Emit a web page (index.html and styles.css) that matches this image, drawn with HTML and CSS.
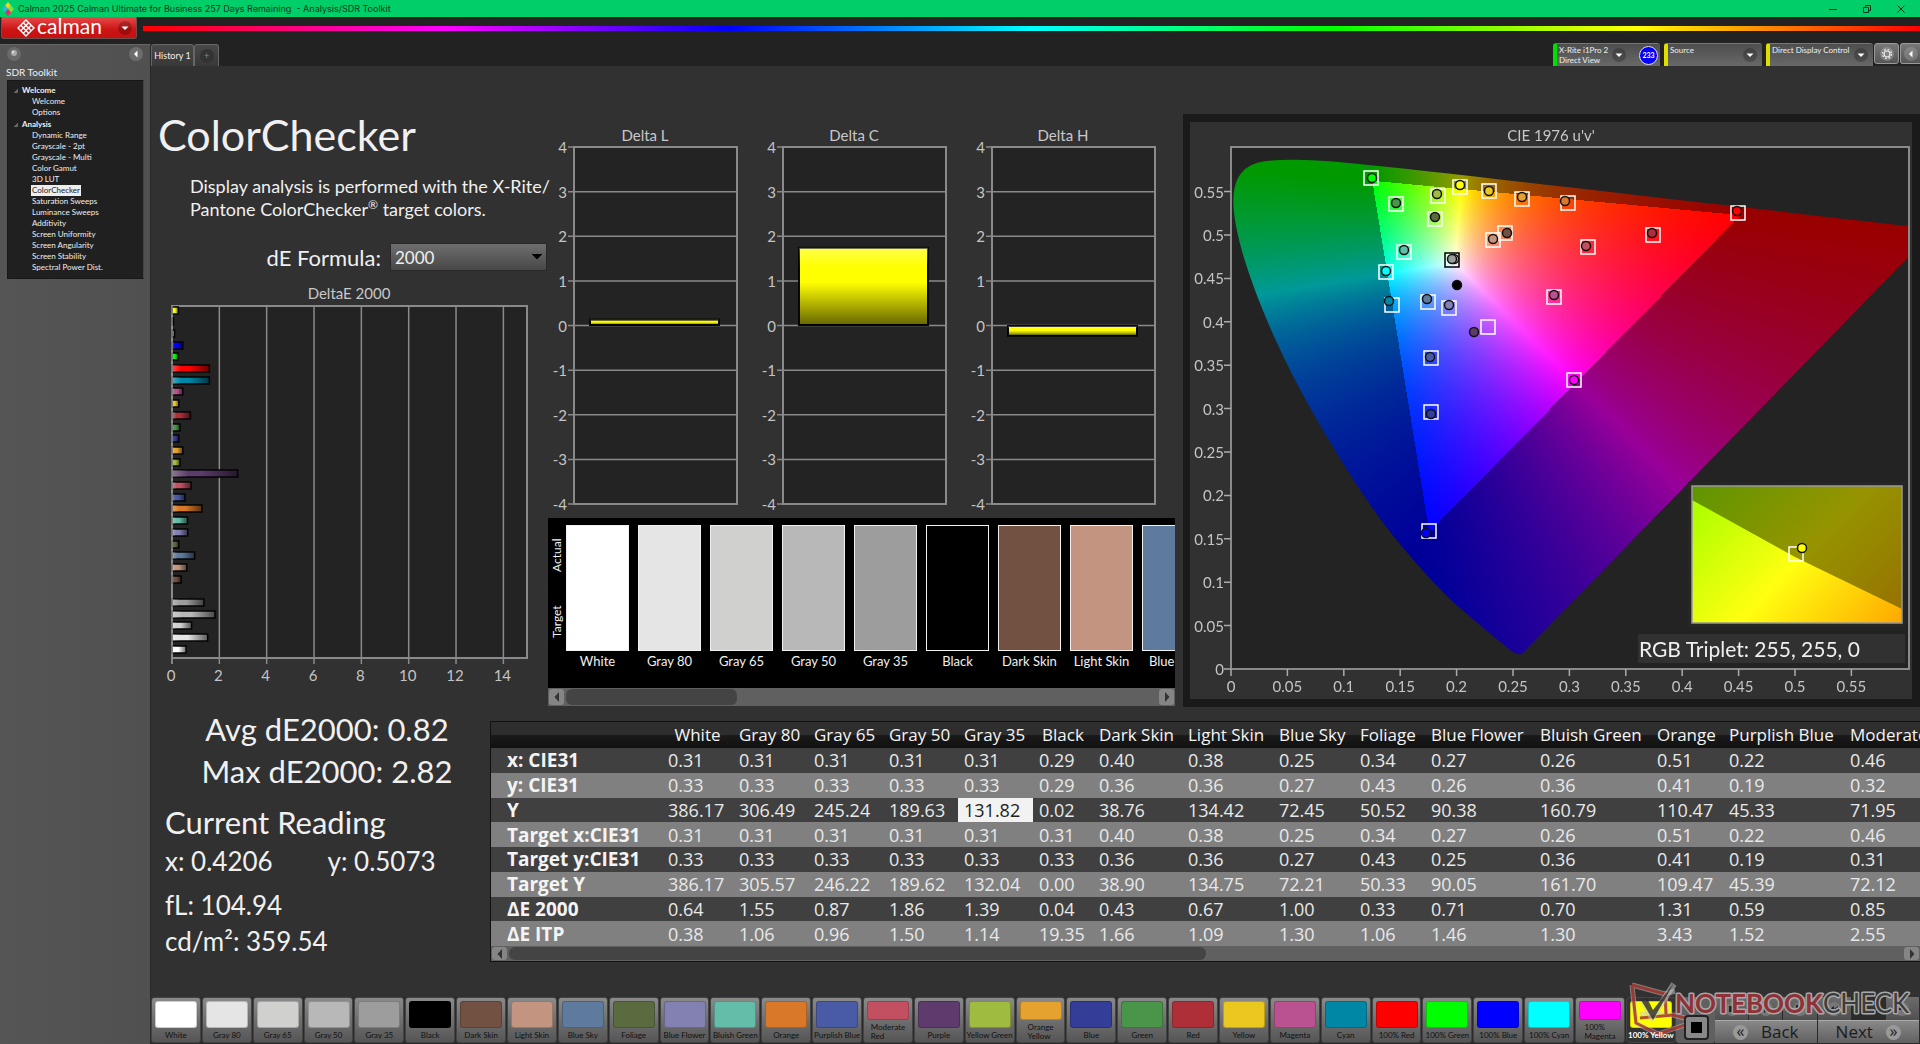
FILE: index.html
```html
<!DOCTYPE html>
<html lang="en">
<head>
<meta charset="utf-8">
<title>Calman 2025 - Analysis/SDR Toolkit</title>
<link rel="stylesheet" href="styles.css">
</head>
<body>
<svg class="defs" width="0" height="0" aria-hidden="true">
  <defs>
    <symbol id="down" viewBox="0 0 14 14"><circle cx="7" cy="7" r="7" fill="#000" opacity=".22"/><path d="M3.500 5.500h7L7 9z" fill="#fff"/></symbol>
    <symbol id="left" viewBox="0 0 14 14"><circle cx="7" cy="7" r="7" fill="#fff" opacity=".16"/><path d="M8.500 3.500v7L5 7z" fill="#fff"/></symbol>
    <symbol id="tri-left" viewBox="0 0 8 12"><path d="M6 1v10L1.500 6z" fill="#333"/></symbol>
    <symbol id="tri-right" viewBox="0 0 8 12"><path d="M2 1v10L6.500 6z" fill="#333"/></symbol>
  </defs>
</svg>
<div class="app">
  <header class="titlebar">
    <svg class="app-icon" viewBox="0 0 12 14"><path d="M6 0l3 3.500-3 3.500-3-3.500z" fill="#f4d21c"/><path d="M3 3.500l3 3.500-3 3.500L0 7z" fill="#29b6e8"/><path d="M9 3.500l3 3.500-3 3.500L6 7z" fill="#7ee03a"/><path d="M6 7l3 3.500L6 14l-3-3.500z" fill="#e82a62"/></svg>
    <span class="title-text">Calman 2025 Calman Ultimate for Business 257 Days Remaining&nbsp; - Analysis/SDR Toolkit</span>
    <div class="window-buttons">
      <button class="win" aria-label="Minimize"><svg viewBox="0 0 10 10"><path d="M1 5.500h8" /></svg></button>
      <button class="win" aria-label="Restore"><svg viewBox="0 0 10 10"><path d="M1.500 3.500h5v5h-5zM3.500 3V1.500h5v5H7"/></svg></button>
      <button class="win" aria-label="Close"><svg viewBox="0 0 10 10"><path d="M1.500 1.500l7 7M8.500 1.500l-7 7"/></svg></button>
    </div>
  </header>
  <div class="brandbar">
    <button class="brand">
      <svg class="brand-mark" viewBox="0 0 18 18"><g fill="none" stroke="#fff" stroke-width="1.400"><path d="M9 1l8 8-8 8-8-8z"/><path d="M6.300 3.700l8 8M3.700 6.300l8 8M11.700 3.700l-8 8M14.300 6.300l-8 8"/></g></svg>
      <span class="brand-name">calman</span>
      <svg class="round"><use href="#down"/></svg>
    </button>
    <div class="rainbow"></div>
  </div>
  <div class="body">
    <aside class="sidebar">
      <div class="side-tools">
        <button class="plain" aria-label="Record"><svg class="round"><circle cx="7" cy="7" r="7" fill="#6a6a6a"/><circle cx="7" cy="6" r="3" fill="#aaa"/><circle cx="6" cy="5" r="1" fill="#eee"/></svg></button>
        <button class="plain" aria-label="Collapse"><svg class="round"><use href="#left"/></svg></button>
      </div>
      <h2 class="side-title">SDR Toolkit</h2>
      <nav class="tree">
        <h3 class="tree-head">Welcome</h3>
        <ul class="tree-list">
          <li><a href="#welcome">Welcome</a></li>
          <li><a href="#options">Options</a></li>
        </ul>
        <h3 class="tree-head">Analysis</h3>
        <ul class="tree-list">
          <li><a href="#dynamic">Dynamic Range</a></li>
          <li><a href="#gray2">Grayscale - 2pt</a></li>
          <li><a href="#graym">Grayscale - Multi</a></li>
          <li><a href="#gamut">Color Gamut</a></li>
          <li><a href="#lut">3D LUT</a></li>
          <li><a class="current" href="#checker">ColorChecker</a></li>
          <li><a href="#saturation">Saturation Sweeps</a></li>
          <li><a href="#luminance">Luminance Sweeps</a></li>
          <li><a href="#additivity">Additivity</a></li>
          <li><a href="#uniformity">Screen Uniformity</a></li>
          <li><a href="#angularity">Screen Angularity</a></li>
          <li><a href="#stability">Screen Stability</a></li>
          <li><a href="#spectral">Spectral Power Dist.</a></li>
        </ul>
      </nav>
    </aside>
    <div class="workspace">
      <div class="tabs">
        <button class="tab">History 1</button><button class="tab add" aria-label="Add history"><span class="plus">+</span></button>
        <div class="devices">
          <button class="device meter"><span class="device-name">X-Rite i1Pro 2<br>Direct View</span><svg class="round"><use href="#down"/></svg><span class="count">233</span></button>
          <button class="device source"><span class="device-name">Source</span><svg class="round"><use href="#down"/></svg></button>
          <button class="device display"><span class="device-name">Direct Display Control</span><svg class="round"><use href="#down"/></svg></button>
          <button class="tool" aria-label="Settings"><svg class="round" viewBox="0 0 14 14"><circle cx="7" cy="7" r="7" fill="#fff" opacity=".2"/><circle cx="7" cy="7" r="3" fill="none" stroke="#eee" stroke-width="1.200"/><circle cx="7" cy="7" r="4.500" fill="none" stroke="#eee" stroke-width="1.200" stroke-dasharray="1.770"/></svg></button>
          <button class="tool last" aria-label="Collapse"><svg class="round"><use href="#left"/></svg></button>
        </div>
      </div>
      <main class="page">
        <div class="upper">
          <section class="intro">
            <h1 class="heading">ColorChecker</h1>
            <p class="lead">Display analysis is performed with the X-Rite/<br>Pantone ColorChecker<sup>®</sup> target colors.</p>
            <div class="formula">
              <label for="formula">dE Formula:</label>
              <select id="formula"><option>2000</option></select>
            </div>
            <svg class="delta-e" id="delta-e" viewBox="0 0 397 402"></svg>
          </section>
          <section class="middle">
            <div class="deltas" id="deltas"></div>
            <div class="patches">
              <div class="sides"><span>Actual</span><span>Target</span></div>
              <figure class="patch"><div class="fill white"></div><figcaption>White</figcaption></figure>
              <figure class="patch"><div class="fill gray80"></div><figcaption>Gray 80</figcaption></figure>
              <figure class="patch"><div class="fill gray65"></div><figcaption>Gray 65</figcaption></figure>
              <figure class="patch"><div class="fill gray50"></div><figcaption>Gray 50</figcaption></figure>
              <figure class="patch"><div class="fill gray35"></div><figcaption>Gray 35</figcaption></figure>
              <figure class="patch"><div class="fill black"></div><figcaption>Black</figcaption></figure>
              <figure class="patch"><div class="fill darkskin"></div><figcaption>Dark Skin</figcaption></figure>
              <figure class="patch"><div class="fill lightskin"></div><figcaption>Light Skin</figcaption></figure>
              <figure class="patch"><div class="fill bluesky"></div><figcaption>Blue Sky</figcaption></figure>
            </div>
            <div class="scroll">
              <button class="scroll-btn" aria-label="Scroll left"><svg><use href="#tri-left"/></svg></button>
              <div class="scroll-track"><div class="thumb short"></div></div>
              <button class="scroll-btn" aria-label="Scroll right"><svg><use href="#tri-right"/></svg></button>
            </div>
          </section>
          <section class="cie">
            <svg class="cie-chart" id="cie" viewBox="1190 121 722 577">
              <rect x="1231" y="146" width="678" height="522" fill="#232323"/>
              <foreignObject x="1231" y="146" width="678" height="522"><canvas class="gamut" id="gamut" width="678" height="522"></canvas></foreignObject>
            </svg>
          </section>
        </div>
        <div class="lower">
          <section class="readings">
            <div class="summary"><div>Avg dE2000: 0.82</div><div>Max dE2000: 2.82</div></div>
            <h2 class="reading-title">Current Reading</h2>
            <div class="xy"><span>x: 0.4206</span><span>y: 0.5073</span></div>
            <div class="fl">fL: 104.94</div>
            <div class="nits">cd/m²: 359.54</div>
          </section>
          <section class="grid">
            <div class="grid-view">
            <table class="data">
              <colgroup><col class="w171"><col class="w71"><col class="w75"><col class="w75"><col class="w75"><col class="w75"><col class="w60"><col class="w89"><col class="w91"><col class="w81"><col class="w71"><col class="w109"><col class="w117"><col class="w72"><col class="w121"><col class="w140"></colgroup>
              <thead><tr><th></th><th class="mid">White</th><th>Gray 80</th><th>Gray 65</th><th>Gray 50</th><th>Gray 35</th><th class="mid">Black</th><th>Dark Skin</th><th>Light Skin</th><th>Blue Sky</th><th>Foliage</th><th>Blue Flower</th><th>Bluish Green</th><th>Orange</th><th>Purplish Blue</th><th>Moderate Red</th></tr></thead>
              <tbody>
                <tr><th>x: CIE31</th><td>0.31</td><td>0.31</td><td>0.31</td><td>0.31</td><td>0.31</td><td>0.29</td><td>0.40</td><td>0.38</td><td>0.25</td><td>0.34</td><td>0.27</td><td>0.26</td><td>0.51</td><td>0.22</td><td>0.46</td></tr>
                <tr><th>y: CIE31</th><td>0.33</td><td>0.33</td><td>0.33</td><td>0.33</td><td>0.33</td><td>0.29</td><td>0.36</td><td>0.36</td><td>0.27</td><td>0.43</td><td>0.26</td><td>0.36</td><td>0.41</td><td>0.19</td><td>0.32</td></tr>
                <tr><th>Y</th><td>386.17</td><td>306.49</td><td>245.24</td><td>189.63</td><td class="selected">131.82</td><td>0.02</td><td>38.76</td><td>134.42</td><td>72.45</td><td>50.52</td><td>90.38</td><td>160.79</td><td>110.47</td><td>45.33</td><td>71.95</td></tr>
                <tr><th>Target x:CIE31</th><td>0.31</td><td>0.31</td><td>0.31</td><td>0.31</td><td>0.31</td><td>0.31</td><td>0.40</td><td>0.38</td><td>0.25</td><td>0.34</td><td>0.27</td><td>0.26</td><td>0.51</td><td>0.22</td><td>0.46</td></tr>
                <tr><th>Target y:CIE31</th><td>0.33</td><td>0.33</td><td>0.33</td><td>0.33</td><td>0.33</td><td>0.33</td><td>0.36</td><td>0.36</td><td>0.27</td><td>0.43</td><td>0.25</td><td>0.36</td><td>0.41</td><td>0.19</td><td>0.31</td></tr>
                <tr><th>Target Y</th><td>386.17</td><td>305.57</td><td>246.22</td><td>189.62</td><td>132.04</td><td>0.00</td><td>38.90</td><td>134.75</td><td>72.21</td><td>50.33</td><td>90.05</td><td>161.70</td><td>109.47</td><td>45.39</td><td>72.12</td></tr>
                <tr><th>ΔE 2000</th><td>0.64</td><td>1.55</td><td>0.87</td><td>1.86</td><td>1.39</td><td>0.04</td><td>0.43</td><td>0.67</td><td>1.00</td><td>0.33</td><td>0.71</td><td>0.70</td><td>1.31</td><td>0.59</td><td>0.85</td></tr>
                <tr><th>ΔE ITP</th><td>0.38</td><td>1.06</td><td>0.96</td><td>1.50</td><td>1.14</td><td>19.35</td><td>1.66</td><td>1.09</td><td>1.30</td><td>1.06</td><td>1.46</td><td>1.30</td><td>3.43</td><td>1.52</td><td>2.55</td></tr>
              </tbody>
            </table>
            </div>
            <div class="scroll thin">
              <button class="scroll-btn" aria-label="Scroll left"><svg><use href="#tri-left"/></svg></button>
              <div class="scroll-track"><div class="thumb long"></div></div>
              <button class="scroll-btn" aria-label="Scroll right"><svg><use href="#tri-right"/></svg></button>
            </div>
          </section>
        </div>
        <footer class="dock">
          <div class="swatches">
            <button class="swatch"><i class="white"></i><span>White</span></button>
            <button class="swatch"><i class="gray80"></i><span>Gray 80</span></button>
            <button class="swatch"><i class="gray65"></i><span>Gray 65</span></button>
            <button class="swatch"><i class="gray50"></i><span>Gray 50</span></button>
            <button class="swatch"><i class="gray35"></i><span>Gray 35</span></button>
            <button class="swatch"><i class="black"></i><span>Black</span></button>
            <button class="swatch"><i class="darkskin"></i><span>Dark Skin</span></button>
            <button class="swatch"><i class="lightskin"></i><span>Light Skin</span></button>
            <button class="swatch"><i class="bluesky"></i><span>Blue Sky</span></button>
            <button class="swatch"><i class="foliage"></i><span>Foliage</span></button>
            <button class="swatch"><i class="blueflower"></i><span>Blue Flower</span></button>
            <button class="swatch"><i class="bluishgreen"></i><span>Bluish Green</span></button>
            <button class="swatch"><i class="orange"></i><span>Orange</span></button>
            <button class="swatch"><i class="purplishblue"></i><span>Purplish Blue</span></button>
            <button class="swatch"><i class="moderatered"></i><span class="two">Moderate<br>Red</span></button>
            <button class="swatch"><i class="purple"></i><span>Purple</span></button>
            <button class="swatch"><i class="yellowgreen"></i><span>Yellow Green</span></button>
            <button class="swatch"><i class="orangeyellow"></i><span class="two">Orange<br>Yellow</span></button>
            <button class="swatch"><i class="blue"></i><span>Blue</span></button>
            <button class="swatch"><i class="green"></i><span>Green</span></button>
            <button class="swatch"><i class="red"></i><span>Red</span></button>
            <button class="swatch"><i class="yellow"></i><span>Yellow</span></button>
            <button class="swatch"><i class="magenta"></i><span>Magenta</span></button>
            <button class="swatch"><i class="cyan"></i><span>Cyan</span></button>
            <button class="swatch"><i class="red100"></i><span>100% Red</span></button>
            <button class="swatch"><i class="green100"></i><span>100% Green</span></button>
            <button class="swatch"><i class="blue100"></i><span>100% Blue</span></button>
            <button class="swatch"><i class="cyan100"></i><span>100% Cyan</span></button>
            <button class="swatch"><i class="magenta100"></i><span class="two">100%<br>Magenta</span></button>
            <button class="swatch active"><i class="yellow100"></i><span>100% Yellow</span></button>
          </div>
          <div class="stop-cell">
            <button class="stop" aria-label="Pattern"><span class="stop-core"></span></button>
          </div>
          <div class="controls">
            <div class="transport">
              <button class="ctl" aria-label="Stop"><svg viewBox="0 0 16 16"><circle cx="8" cy="8" r="7"/><path d="M5 5h6v6H5z"/></svg></button>
              <button class="ctl" aria-label="Play"><svg viewBox="0 0 16 16"><circle cx="8" cy="8" r="7"/><path d="M6 4l5 4-5 4z"/></svg></button>
              <button class="ctl" aria-label="Step"><svg viewBox="0 0 16 16"><circle cx="8" cy="8" r="7"/><path d="M4 4h2v8H4zM7 4l5 4-5 4z"/></svg></button>
              <button class="ctl" aria-label="Loop"><svg viewBox="0 0 16 16"><circle cx="8" cy="8" r="7"/><path d="M4 8l4-3v6zM8 8l4-3v6z"/></svg></button>
              <button class="ctl dark" aria-label="Refresh"><svg viewBox="0 0 16 16"><circle cx="8" cy="8" r="7"/></svg></button>
              <button class="ctl" aria-label="More"><svg viewBox="0 0 16 16"><circle cx="8" cy="8" r="7"/><path d="M5 7h6v2H5z"/></svg></button>
            </div>
            <div class="nav">
              <button class="nav-btn"><span class="chev">«</span>Back</button>
              <button class="nav-btn">Next<span class="chev">»</span></button>
            </div>
          </div>
          <svg class="watermark" viewBox="0 0 292 60">
            <g fill="none" stroke-linejoin="round">
              <path d="M4 6l33 9 10-3M4 6l4 38 22 11 39-13-24-6-33-1M39 36l-2-18" stroke="#ccc" stroke-width="5" opacity=".5"/>
              <path d="M4 6l33 9 1 20M4 6l4 38 22 11 39-13-24-6-33 3" stroke="#a02a20" stroke-width="3" opacity=".8"/>
              <path d="M15 22l9 17L46 5" stroke="#ccc" stroke-width="6" opacity=".5"/>
              <path d="M13 21l6-2 6 12L46 4 25 41z" fill="#2b2b2b" opacity=".8"/>
            </g>
            <text class="mark" x="47" y="34"><tspan class="mark-a">NOTEBOOK</tspan><tspan class="mark-b">CHECK</tspan></text>
          </svg>
        </footer>
      </main>
    </div>
  </div>
</div>
<script src="charts.js"></script>
</body>
</html>
```

FILE: styles.css
```css
* { box-sizing: border-box; }
body { margin: 0; background: #313131; color: #f0f0f0; font-family: Lato, "Open Sans", sans-serif; }
button { font: inherit; color: inherit; border: 0; padding: 0; margin: 0; background: none; }
h1, h2, h3, p, ul, figure { margin: 0; padding: 0; font-weight: 400; list-style: none; }
.defs { position: absolute; }
.app { min-height: 100vh; display: flex; flex-direction: column; overflow: hidden; }
.round { width: 14px; height: 14px; flex: none; display: block; }

.titlebar { height: 17px; background: #00cf69; display: flex; align-items: center; color: #06331c; }
.app-icon { width: 12px; height: 14px; margin: 0 4px 0 2px; }
.title-text { font: 9px/17px Inter, "Open Sans", sans-serif; }
.window-buttons { margin-left: auto; display: flex; padding-right: 2px; }
.win { width: 34px; height: 17px; display: flex; align-items: center; justify-content: center; }
.win svg { width: 10px; height: 10px; fill: none; stroke: #06331c; }

.brandbar { height: 27px; background: #222; display: flex; gap: 6px; align-items: flex-start; }
.brand { width: 136px; height: 22px; margin-left: 1px; display: flex; align-items: center; background: linear-gradient(#e84a4a, #cc1414 60%, #c81010); border: 1px solid #6b5050; border-top: 0; border-radius: 0 0 3px 3px; color: #fff; padding: 0 4px 0 15px; }
.brand-mark { width: 18px; height: 18px; }
.brand-name { font: 21px/18px Lato, sans-serif; margin: -4px auto 0 2px; }
.rainbow { flex: 1; height: 5px; margin-top: 9px; background: linear-gradient(90deg, #f00, #f0f 17%, #00f 33%, #0ff 50%, #0f0 67%, #ff0 84%, #f00); }

.body { flex: 1; display: flex; background: #222; }
.sidebar { width: 151px; flex: none; background: linear-gradient(90deg, #555, #505050); border-top: 1px solid #666; border-right: 1px solid #2a2a2a; }
.side-tools { display: flex; justify-content: space-between; padding: 2px 7px 0; }
.plain { display: block; }
.side-title { font-size: 10px; line-height: 12px; padding: 5px 0 2px 6px; }
.tree { margin: 0 6px 0 7px; height: 199px; background: #202020; border: 1px solid #181818; border-right-color: #444; padding-top: 3px; font-size: 8px; line-height: 11px; }
.tree-head { font-size: 8px; font-weight: 700; line-height: 12px; padding-left: 14px; background: linear-gradient(135deg, transparent 50%, #666 50%) 6px 5px / 4px 4px no-repeat; }
.tree-list { padding-left: 24px; }
.tree-list a { color: #eee; text-decoration: none; display: inline-block; height: 11px; vertical-align: top; }
.tree-list .current { background: #eee; color: #222; padding: 0 1px; margin-left: -1px; }

.workspace { flex: 1; min-width: 0; display: flex; flex-direction: column; }
.tabs { height: 22px; display: flex; align-items: flex-end; }
.tab { width: 43px; height: 22px; background: linear-gradient(#484848, #383838); border: 1px solid #666; border-bottom: 0; border-radius: 3px 3px 0 0; font-size: 9px; }
.tab.add { width: 25px; display: flex; justify-content: center; align-items: center; }
.plus { width: 14px; height: 14px; border-radius: 50%; background: #333; line-height: 13px; color: #888; }
.devices { margin-left: auto; display: flex; gap: 4px; }
.device { height: 23px; background: linear-gradient(#4e4e4e, #686868); border-radius: 3px 3px 0 0; border-top: 1px solid #777; border-left: 4px solid #dede00; display: flex; align-items: center; padding: 0 5px 0 2px; font-size: 8px; line-height: 10px; text-align: left; }
.device-name { align-self: flex-start; flex: 1; padding-top: 1px; white-space: nowrap; }
.device.meter { width: 107px; border-left-color: #00e000; padding-right: 2px; }
.device.source { width: 98px; }
.device.display { width: 107px; }
.count { width: 19px; height: 19px; margin-left: 13px; border-radius: 50%; background: #00f; border: 1px solid #ddd; font-size: 7px; font-weight: 700; line-height: 17px; text-align: center; color: #fff; }
.tool { width: 25px; height: 21px; border: 1px solid #999; border-radius: 3px; background: linear-gradient(#777, #555); display: flex; align-items: center; justify-content: center; margin-left: -3px; }
.tool.last { width: 20px; border-right: 0; border-radius: 3px 0 0 3px; }

.page { flex: 1; background: #313131; display: flex; flex-direction: column; position: relative; }
.upper { display: grid; grid-template-columns: 397px 635px 1fr; align-items: start; }
.intro { padding-top: 43px; }
.heading { font-size: 43px; line-height: 52px; padding-left: 7px; }
.lead { margin-top: 14px; padding-left: 39px; font-size: 18px; line-height: 23px; white-space: nowrap; }
.lead sup { font-size: 12px; line-height: 0; }
.formula { margin: 22px 1px 13px 0; display: flex; justify-content: flex-end; gap: 9px; align-items: center; font-size: 22px; line-height: 27px; }
.formula select { width: 157px; height: 28px; appearance: none; border: 1px solid #282828; border-radius: 0; padding: 0 4px; font: 17px Lato, sans-serif; color: #f0f0f0; background: linear-gradient(to bottom right, #000 50%, transparent 50%) 146px 10px / 5px 6px no-repeat, linear-gradient(to bottom left, #000 50%, transparent 50%) 141px 10px / 5px 6px no-repeat, linear-gradient(#6e6e6e, #474747); }
.delta-e { width: 397px; margin-left: -1px; display: block; }
.axis-text { font: 15px Lato, sans-serif; fill: #c4c4c4; }
.chart-title { font: 15px Lato, sans-serif; fill: #c8c8c8; text-anchor: middle; }
.middle { margin-top: 59px; width: 627px; }
.deltas { display: flex; height: 387px; }
.delta { width: 209px; height: 387px; }
.patches { margin-top: 6px; height: 170px; background: #000; display: flex; overflow: hidden; padding-top: 7px; gap: 9px; }
.sides { width: 9px; flex: none; display: flex; flex-direction: column; font-size: 12px; line-height: 12px; }
.sides span { writing-mode: vertical-rl; transform: rotate(180deg); height: 60px; text-align: center; margin: 0 0 7px 3px; width: 12px; }
.patch { width: 63px; flex: none; }
.fill { height: 126px; border: 1px solid #f0f0f0; }
.patch figcaption { text-align: center; font-size: 13px; line-height: 20px; white-space: nowrap; }
.scroll { height: 18px; background: #606060; display: flex; align-items: center; padding: 1px; gap: 2px; }
.scroll.thin { height: 15px; }
.scroll-btn { width: 15px; align-self: stretch; background: #858585; border-radius: 3px; display: flex; align-items: center; justify-content: center; }
.scroll-btn svg { width: 8px; height: 12px; display: block; }
.scroll-track { flex: 1; align-self: stretch; }
.thumb { height: 100%; border-radius: 6px; background: #444; }
.thumb.short { width: 29%; }
.thumb.long { width: 50%; }
.cie { margin-top: 48px; border: 8px solid #1a1a1a; border-left-width: 7px; background: #313131; }
.cie-chart { display: block; width: 100%; }
.gamut { display: block; }
.triplet { font: 21px Lato, sans-serif; fill: #f0f0f0; }

.lower { display: grid; grid-template-columns: 339px 1fr; align-items: start; padding-top: 1px; }
.readings { padding-left: 14px; white-space: nowrap; font-size: 26px; }
.summary { font-size: 31px; line-height: 42px; text-align: center; width: 292px; padding-left: 32px; }
.reading-title { font-size: 31px; line-height: 42px; margin-top: 9px; }
.xy { display: flex; line-height: 36px; }
.xy span { width: 166px; }
.fl { line-height: 36px; margin-top: 8px; }
.nits { line-height: 36px; }
.grid { margin-top: 13px; border: 1px solid #111; border-right: 0; min-width: 0; }
.grid-view { overflow: hidden; }
.data { width: 1493px; height: 224px; table-layout: fixed; border-collapse: collapse; font: 18px/20px "Open Sans", sans-serif; white-space: nowrap; }
.data th, .data td { text-align: left; padding: 0 0 0 6px; overflow: hidden; font-weight: 400; }
.data thead tr { background: linear-gradient(#2e2e2e 50%, #1a1a1a 50%, #111); height: 26px; }
.data thead th { font-size: 17px; color: #f4f4f4; }
.data thead .mid { text-align: center; padding-left: 0; }
.data tbody tr { background: #404040; }
.data tbody tr:nth-child(even) { background: #808080; }
.data tbody td { color: #e8e8e8; }
.data tbody th { font-size: 19px; font-weight: 700; padding-left: 16px; color: #f4f4f4; }
.data tbody .selected { background: #f2f2f2; color: #222; }
.w171 { width: 171px; } .w71 { width: 71px; } .w75 { width: 75px; } .w60 { width: 60px; } .w89 { width: 89px; } .w91 { width: 91px; } .w81 { width: 81px; } .w109 { width: 109px; } .w117 { width: 117px; } .w72 { width: 72px; } .w121 { width: 121px; } .w140 { width: 140px; }

.dock { margin-top: auto; height: 47px; display: flex; padding: 0 1px 1px 0; position: relative; background: #2a2a2a; }
.swatches { flex: 1; display: flex; gap: 1px; }
.swatch { flex: 1 1 0; min-width: 0; display: flex; flex-direction: column; align-items: center; background: linear-gradient(#8a8a8a, #555); border: 1px solid #444; border-radius: 3px; padding: 3px 0 0; color: #111; font-size: 8px; line-height: 9px; white-space: nowrap; }
.swatch i { flex: 1; width: 42px; border-radius: 3px; border: 1px solid #0003; }
.swatch span { height: 14px; padding-top: 3px; }
.swatch .two { height: 22px; text-align: left; }
.swatch.active { background: #333; color: #fff; font-weight: 700; }
.swatch.active span { position: relative; z-index: 1; }
.stop-cell { width: 39px; background: #606060; border-radius: 3px; padding: 18px 6px 0 8px; }
.stop { width: 25px; height: 25px; border: 2px solid #222; border-radius: 4px; background: #888; display: flex; align-items: center; justify-content: center; position: relative; z-index: 1; }
.stop-core { width: 11px; height: 11px; background: #000; }
.controls { width: 204px; display: flex; flex-direction: column; }
.transport { height: 23px; display: flex; gap: 1px; }
.ctl { flex: 1; background: linear-gradient(#6c6c6c, #505050); display: flex; justify-content: center; align-items: center; }
.ctl svg { width: 16px; height: 16px; fill: #222; }
.ctl circle { fill: #777; }
.ctl.dark { background: #2c2c2c; }
.ctl.dark circle { fill: #333; }
.nav { flex: 1; display: flex; gap: 1px; }
.nav-btn { flex: 1; background: linear-gradient(#888, #606060); border-top: 1px solid #aaa; color: #1c1c1c; font: 17px/20px "Open Sans", sans-serif; display: flex; align-items: center; justify-content: center; gap: 13px; }
.chev { width: 15px; height: 15px; border-radius: 50%; background: #999; font-size: 16px; line-height: 12px; text-align: center; }
.watermark { position: absolute; right: 0; bottom: 5px; width: 292px; height: 60px; pointer-events: none; }
.mark { font: 700 26px Lato, sans-serif; stroke: #a8a8a8; stroke-width: 3px; paint-order: stroke; stroke-linejoin: round; }
.mark-a { fill: #8f3237; }
.mark-b { fill: #3c3c3c; font-weight: 400; }

.white { background: #fff; } .gray80 { background: #e5e5e5; } .gray65 { background: #d0d0cf; } .gray50 { background: #b8b8b8; }
.gray35 { background: #9d9d9d; } .black { background: #000; } .darkskin { background: #735142; } .lightskin { background: #c39580; }
.bluesky { background: #5e7a9d; } .foliage { background: #5a6b40; } .blueflower { background: #8380b2; } .bluishgreen { background: #64bda9; }
.orange { background: #d87828; } .purplishblue { background: #4a5ba6; } .moderatered { background: #c25060; } .purple { background: #5d3b6c; }
.yellowgreen { background: #9fbb40; } .orangeyellow { background: #e6a22e; } .blue { background: #343d97; } .green { background: #499549; }
.red { background: #ae2f38; } .yellow { background: #ebc820; } .magenta { background: #ba5292; } .cyan { background: #0087a6; }
.red100 { background: #f00; } .green100 { background: #0f0; } .blue100 { background: #00f; } .cyan100 { background: #0ff; }
.magenta100 { background: #f0f; } .yellow100 { background: #ff0; }
```

FILE: charts.js
```js
const NS = 'http://www.w3.org/2000/svg';
function add(parent, name, attrs, text) {
  const el = document.createElementNS(NS, name);
  for (const k in attrs) el.setAttribute(k, attrs[k]);
  if (text !== undefined) el.textContent = text;
  parent.appendChild(el);
  return el;
}
function gradient(svg, id, vertical) {
  const g = add(add(svg, 'defs', {}), 'linearGradient', vertical ? { id, x2: 0, y2: 1 } : { id });
  add(g, 'stop', { offset: 0, 'stop-color': '#fff', 'stop-opacity': 0.3 });
  add(g, 'stop', { offset: 0.25, 'stop-color': '#fff', 'stop-opacity': 0 });
  add(g, 'stop', { offset: 0.45, 'stop-color': '#000', 'stop-opacity': 0 });
  add(g, 'stop', { offset: 1, 'stop-color': '#000', 'stop-opacity': 0.6 });
}

// DeltaE 2000 bars, last patch on top
const de = document.getElementById('delta-e');
gradient(de, 'shade-h', false);
add(de, 'text', { class: 'chart-title', x: 199, y: 15 }, 'DeltaE 2000');
add(de, 'rect', { x: 22, y: 22, width: 355, height: 352, fill: '#232323', stroke: '#8a8a8a', 'stroke-width': 2 });
for (let v = 0; v <= 14; v += 2) {
  const x = 22 + v * 23.67;
  add(de, 'path', { d: `M${x} 22V380`, stroke: '#8a8a8a', 'stroke-width': 1.5 });
  add(de, 'text', { class: 'axis-text', x: x - 1, y: 397, 'text-anchor': 'middle' }, v);
}
const bars = [
  [0.31, '#ff0'], [0.1, '#111'], [0.15, '#2cc'], [0.5, '#00f'], [0.3, '#0f0'], [1.62, '#f00'], [1.62, '#0087a6'], [0.5, '#ba5292'],
  [0.33, '#ebc820'], [0.82, '#ae2f38'], [0.38, '#499549'], [0.33, '#343d97'], [0.5, '#e6a22e'], [0.38, '#9fbb40'], [2.82, '#5d3b6c'],
  [0.85, '#c25060'], [0.59, '#4a5ba6'], [1.31, '#d87828'], [0.7, '#64bda9'], [0.71, '#8380b2'], [0.33, '#5a6b40'], [1, '#5e7a9d'],
  [0.67, '#c39580'], [0.43, '#735142'], [0, '#000'], [1.39, '#9d9d9d'], [1.86, '#b8b8b8'], [0.87, '#d0d0d0'], [1.55, '#e5e5e5'], [0.64, '#fff']
];
bars.forEach(([v, c], i) => {
  if (!v) return;
  const box = { x: 22, y: Math.round(22.5 + i * 11.7), width: v * 23.67 - 1, height: 7 };
  add(de, 'rect', { ...box, fill: c, stroke: '#050505', 'stroke-width': 1.5 });
  add(de, 'rect', { ...box, fill: 'url(#shade-h)' });
});
add(de, 'path', { d: 'M22 22V380', stroke: '#8a8a8a', 'stroke-width': 1.5 });

// Delta L / C / H
[['Delta L', 0.12], ['Delta C', 1.73], ['Delta H', -0.22]].forEach(([name, v], n) => {
  const s = add(document.getElementById('deltas'), 'svg', { class: 'delta', viewBox: '0 0 209 387' });
  gradient(s, 'shade-v' + n, true);
  add(s, 'text', { class: 'chart-title', x: 97, y: 16 }, name);
  add(s, 'rect', { x: 26, y: 22, width: 163, height: 357, fill: '#232323', stroke: '#8a8a8a', 'stroke-width': 2 });
  for (let t = 4; t >= -4; t--) {
    const y = 200.5 - t * 44.625;
    add(s, 'path', { d: `M20 ${y}H189`, stroke: '#8a8a8a', 'stroke-width': 1.5 });
    add(s, 'text', { class: 'axis-text', x: 19, y: y + 6, 'text-anchor': 'end' }, t);
  }
  const h = Math.abs(v) * 44.625;
  const box = { x: 42, y: v > 0 ? 200 - h : 201, width: 129, height: h };
  add(s, 'rect', { ...box, fill: '#ff0', stroke: '#050505', 'stroke-width': 2 });
  add(s, 'rect', { ...box, fill: `url(#shade-v${n})` });
});

// CIE 1976 diagram: x = 1231 + 1130 u', y = 668 - 868 v'
const locus = [.1741,.005,.1714,.0051,.1689,.0069,.1644,.0109,.1566,.0177,.144,.0297,.1241,.0578,.1096,.0868,.0913,.1327,.0687,.2007,.0454,.295,.0235,.4127,.0082,.5384,.0039,.6548,.0139,.7502,.0389,.812,.0743,.8338,.1142,.8262,.1547,.8059,.1929,.7816,.2296,.7543,.2658,.7243,.3016,.6923,.3731,.6245,.4441,.5547,.5125,.4866,.5752,.4242,.627,.3725,.6658,.334,.6915,.3083,.719,.2809,.7347,.2653];
const ctx = document.getElementById('gamut').getContext('2d');
const W = 678, H = 522;
const img = ctx.createImageData(W, H);
for (let py = 0; py < H; py++) for (let px = 0; px < W; px++) {
  const u = (px + 0.5) / 1130, v = (H - py - 0.5) / 868;
  const X = 9 * u / (4 * v), Z = (12 - 3 * u - 20 * v) / (4 * v);
  let r = 3.2406 * X - 1.5372 - 0.4986 * Z;
  let g = -0.9689 * X + 1.8758 + 0.0415 * Z;
  let b = 0.0557 * X - 0.204 + 1.057 * Z;
  const dim = Math.min(r, g, b) < 0 ? 0.6 : 1;
  r = Math.max(r, 0); g = Math.max(g, 0); b = Math.max(b, 0);
  const scale = 255 * dim / Math.max(r, g, b);
  const i = (py * W + px) * 4;
  img.data[i] = r * scale;
  img.data[i + 1] = g * scale;
  img.data[i + 2] = b * scale;
  img.data[i + 3] = 255;
}
ctx.putImageData(img, 0, 0);
ctx.globalCompositeOperation = 'destination-in';
const pts = [];
for (let i = 0; i < locus.length; i += 2) {
  const d = -2 * locus[i] + 12 * locus[i + 1] + 3;
  pts.push([4 * locus[i] / d * 1130, H - 9 * locus[i + 1] / d * 868]);
}
ctx.beginPath();
ctx.moveTo(...pts[0]);
for (let i = 1; i < pts.length - 1; i++) {
  ctx.quadraticCurveTo(pts[i][0], pts[i][1], (pts[i][0] + pts[i + 1][0]) / 2, (pts[i][1] + pts[i + 1][1]) / 2);
}
ctx.lineTo(...pts[pts.length - 1]);
ctx.fill();

const cie = document.getElementById('cie');
add(cie, 'rect', { x: 1231, y: 146, width: 678, height: 522, fill: 'none', stroke: '#8a8a8a', 'stroke-width': 2 });
add(cie, 'text', { class: 'chart-title', x: 1551, y: 140 }, "CIE 1976 u'v'");
for (let i = 0; i < 12; i++) {
  const label = String(Math.round(i * 5) / 100);
  const x = 1231 + i * 56.4, y = 668 - i * 43.4;
  add(cie, 'path', { d: `M${x} 668v7M1231 ${y}h-7`, stroke: '#aaa', 'stroke-width': 1.5 });
  add(cie, 'text', { class: 'axis-text', x, y: 691, 'text-anchor': 'middle' }, label);
  add(cie, 'text', { class: 'axis-text', x: 1224, y: y + 6, 'text-anchor': 'end' }, label);
}
// target x, target y, reading x, reading y, patch colour
const points = [
  [1371,177,1372,177,'#0f0'], [1396,203,1396,202,'#499549'], [1438,195,1437,193,'#9fbb40'], [1435,218,1435,216,'#5a6b40'],
  [1460,186,1460,184,'#ff0'], [1489,190,1489,190,'#ebc820'], [1522,198,1522,196,'#e6a22e'], [1568,202,1565,200,'#d87828'],
  [1738,212,1737,210,'#f00'], [1653,234,1652,232,'#ae2f38'], [1588,246,1586,245,'#c25060'], [1505,232,1507,232,'#735142'],
  [1493,239,1493,238,'#c39580'], [1404,251,1404,249,'#64bda9'], [1386,271,1386,270,'#0ff'], [1392,304,1389,300,'#0087a6'],
  [1428,301,1427,298,'#5e7a9d'], [1449,307,1449,304,'#8380b2'], [1488,326,1474,331,'#5d3b6c'], [1554,296,1554,294,'#ba5292'],
  [1574,379,1574,379,'#f0f'], [1431,357,1430,356,'#4a5ba6'], [1431,411,1431,413,'#343d97'], [1429,530,1426,532,'#00f']
];
const square = (x, y, c) => add(cie, 'rect', { x: x - 7, y: y - 7, width: 14, height: 14, fill: 'none', stroke: c, 'stroke-width': 1.5 });
const dot = (x, y, c) => add(cie, 'circle', { cx: x, cy: y, r: 4.5, fill: c, stroke: '#111', 'stroke-width': 1.5 });
points.forEach(([tx, ty, rx, ry, c]) => { square(tx, ty, '#fff'); dot(rx, ry, c); });
square(1452, 259, '#000');
dot(1454, 258, '#e5e5e5');
dot(1452, 258, '#9d9d9d');
dot(1457, 284, '#000');

// magnified view around the current target
const defs = add(cie, 'defs', {});
[['in', '#a8ff00', '#ffff10', '#ffa800'], ['out', '#629600', '#969400', '#967000']].forEach(([id, a, b, c]) => {
  const g = add(defs, 'linearGradient', { id, gradientUnits: 'userSpaceOnUse', x1: 1720, y1: 468, x2: 1892, y2: 632 });
  add(g, 'stop', { offset: 0, 'stop-color': a });
  add(g, 'stop', { offset: 0.5, 'stop-color': b });
  add(g, 'stop', { offset: 1, 'stop-color': c });
});
add(cie, 'rect', { x: 1688, y: 481, width: 218, height: 145, fill: '#262626' });
add(cie, 'rect', { x: 1692, y: 485, width: 210, height: 137, fill: 'url(#out)' });
add(cie, 'path', { d: 'M1692 499L1795 556 1902 608V622H1692z', fill: 'url(#in)' });
add(cie, 'rect', { x: 1692, y: 485, width: 210, height: 137, fill: 'none', stroke: '#999', 'stroke-width': 1.5 });
square(1796, 553, '#fff');
dot(1802, 547, '#ff0');
add(cie, 'rect', { x: 1638, y: 633, width: 267, height: 29, fill: '#313131' });
add(cie, 'text', { class: 'triplet', x: 1639, y: 656 }, 'RGB Triplet: 255, 255, 0');
```
